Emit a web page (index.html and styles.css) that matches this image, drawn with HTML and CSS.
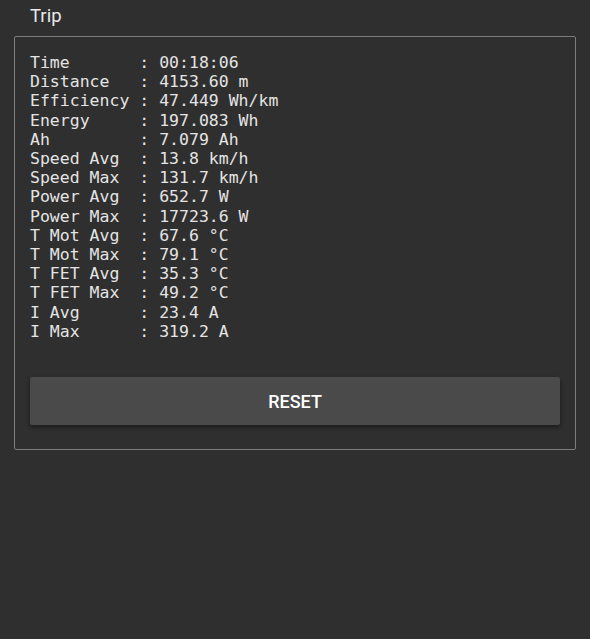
FILE: index.html
```html
<!DOCTYPE html>
<html>
<head>
<meta charset="utf-8">
<link rel="stylesheet" href="styles.css">
</head>
<body>
<div class="title">Trip</div>
<div class="box">
<pre class="stats">Time       : 00:18:06
Distance   : 4153.60 m
Efficiency : 47.449 Wh/km
Energy     : 197.083 Wh
Ah         : 7.079 Ah
Speed Avg  : 13.8 km/h
Speed Max  : 131.7 km/h
Power Avg  : 652.7 W
Power Max  : 17723.6 W
T Mot Avg  : 67.6 °C
T Mot Max  : 79.1 °C
T FET Avg  : 35.3 °C
T FET Max  : 49.2 °C
I Avg      : 23.4 A
I Max      : 319.2 A</pre>
<button class="reset">RESET</button>
</div>
</body>
</html>
```
FILE: styles.css
```css
html, body {
  margin: 0;
  background: #2f2f2f;
  height: 100%;
}
body {
  font-family: Roboto, "Noto Sans", sans-serif;
  color: #e8e8e8;
}
.title {
  font-size: 18.5px;
  padding: 4px 0 0 30px;
  height: 36px;
  line-height: 24px;
  box-sizing: border-box;
}
.box {
  margin: 0 14px;
  border: 1px solid #7c7c7c;
  border-radius: 2px;
  padding: 16px 15px 24px 15px;
  height: 414px;
  box-sizing: border-box;
  display: flex;
  flex-direction: column;
}
.stats {
  margin: 0;
  font-family: "DejaVu Sans Mono", monospace;
  font-size: 16.5px;
  line-height: 19.2px;
  color: #e4e4e4;
}
.reset {
  margin-top: auto;
  height: 48px;
  width: 100%;
  border: none;
  border-radius: 2px;
  background: #4a4a4a;
  color: #ffffff;
  font-family: Roboto, sans-serif;
  font-weight: 500;
  font-size: 18px;
  box-shadow: 0 2px 4px rgba(0,0,0,0.45);
}
```
